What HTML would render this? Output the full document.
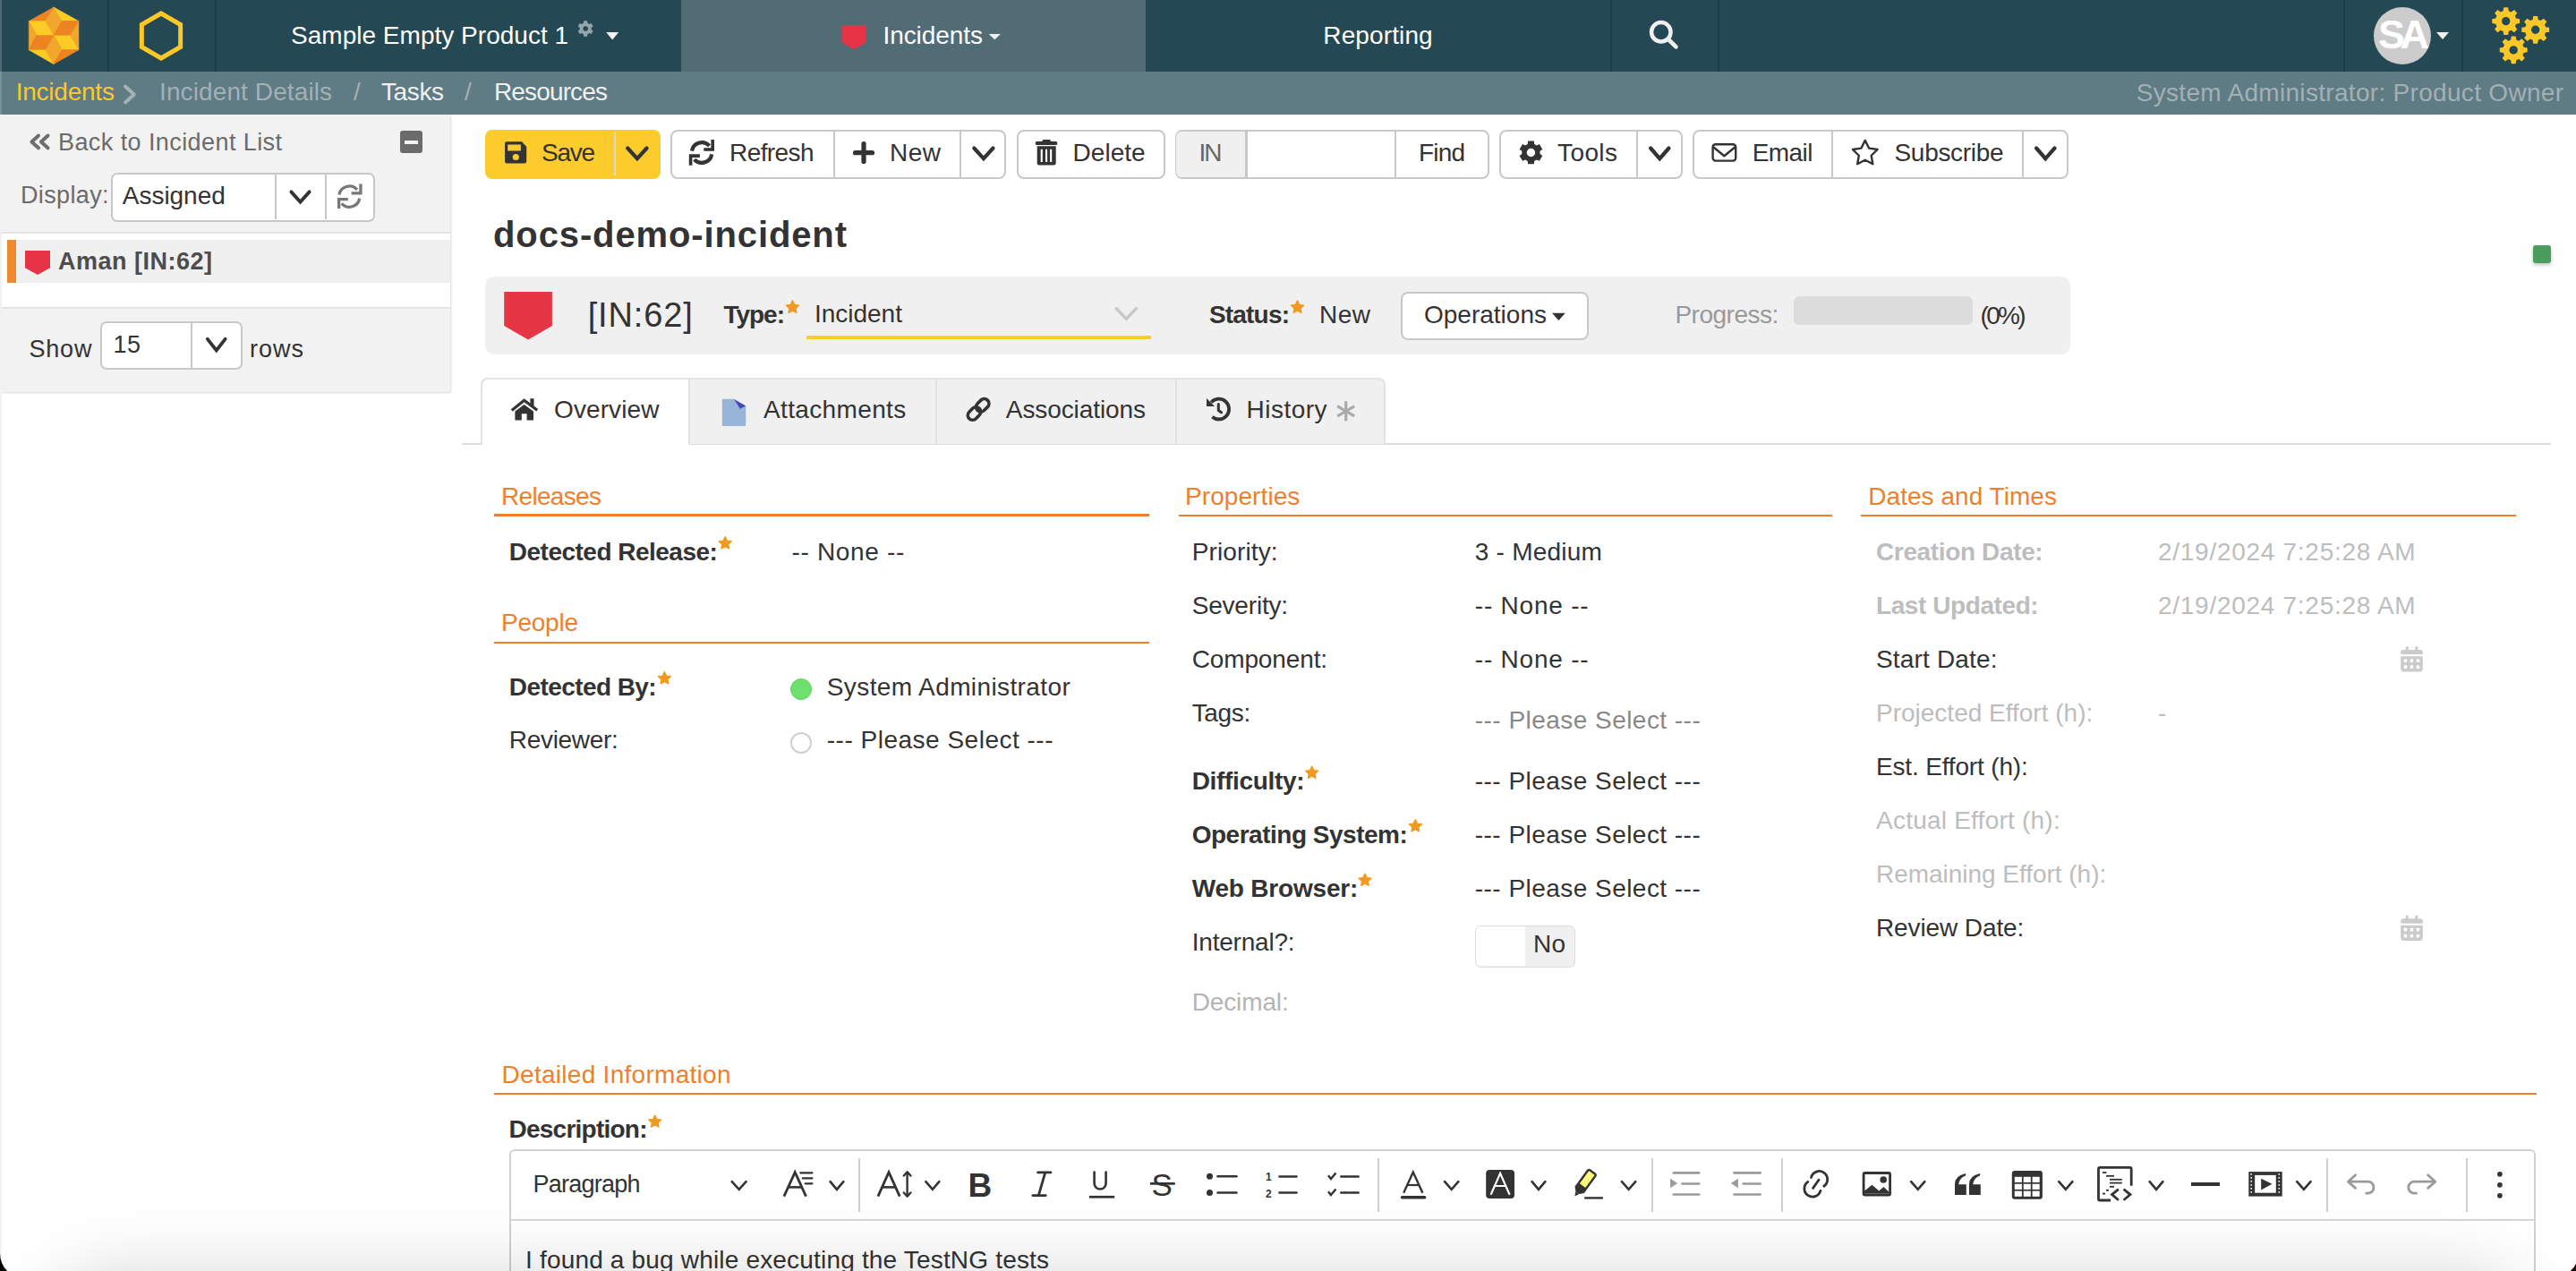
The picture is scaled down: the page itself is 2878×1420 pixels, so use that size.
<!DOCTYPE html>
<html><head><meta charset="utf-8"><style>
html,body{margin:0;padding:0;width:2878px;height:1420px;overflow:hidden;background:#fff;}
body{position:relative;font-family:"Liberation Sans",sans-serif;}
.a{position:absolute;box-sizing:border-box;}
.t{position:absolute;white-space:nowrap;line-height:1;}
svg.a{overflow:visible;}
</style></head><body>
<div class="a" style="left:0px;top:0px;width:2878px;height:80px;background:#244955;"></div>
<div class="a" style="left:761px;top:0px;width:519px;height:80px;background:#516c75;"></div>
<div class="a" style="left:120px;top:0px;width:2px;height:80px;background:#173d49;"></div>
<div class="a" style="left:240px;top:0px;width:2px;height:80px;background:#173d49;"></div>
<div class="a" style="left:1799px;top:0px;width:2px;height:80px;background:#173d49;"></div>
<div class="a" style="left:1919px;top:0px;width:2px;height:80px;background:#173d49;"></div>
<div class="a" style="left:2618px;top:0px;width:2px;height:80px;background:#173d49;"></div>
<div class="a" style="left:2750px;top:0px;width:2px;height:80px;background:#173d49;"></div>
<div class="a" style="left:0px;top:80px;width:2878px;height:48px;background:#5f7b84;"></div>
<div class="t" style="left:325.0px;top:25.7px;font-size:28px;color:#fff;letter-spacing:0.02px;">Sample Empty Product 1</div>
<div class="t" style="left:986.5px;top:26.0px;font-size:28px;color:#fff;letter-spacing:-0.08px;">Incidents</div>
<div class="t" style="left:1478.3px;top:26.0px;font-size:28px;color:#fff;letter-spacing:0.12px;">Reporting</div>
<div class="t" style="left:17.7px;top:89.3px;font-size:28px;color:#fcc92a;letter-spacing:-0.23px;">Incidents</div>
<div class="t" style="left:178.0px;top:89.3px;font-size:28px;color:#a3b0b4;letter-spacing:0.11px;">Incident Details</div>
<div class="t" style="left:395.0px;top:89.3px;font-size:28px;color:#a3b0b4;">/</div>
<div class="t" style="left:426.0px;top:89.3px;font-size:28px;color:#f0f0f0;letter-spacing:-0.39px;">Tasks</div>
<div class="t" style="left:519.0px;top:89.3px;font-size:28px;color:#a3b0b4;">/</div>
<div class="t" style="left:552.0px;top:89.3px;font-size:28px;color:#f0f0f0;letter-spacing:-0.86px;">Resources</div>
<div class="t" style="left:2386.7px;top:89.6px;font-size:28px;color:#a3b0b4;letter-spacing:0.31px;">System Administrator: Product Owner</div>
<div class="a" style="left:2652px;top:8px;width:64px;height:64px;border-radius:50%;background:#cccccc;"></div>
<div class="t" style="left:2657.0px;top:15.5px;font-size:45px;color:#fff;font-weight:bold;letter-spacing:-5.55px;">SA</div>
<div class="a" style="left:2px;top:128px;width:501px;height:310px;background:#f2f2f2;box-shadow:1px 1px 2px rgba(0,0,0,0.15);"></div>
<div class="a" style="left:2px;top:259px;width:501px;height:86px;background:#fff;border-top:2px solid #e4e4e4;border-bottom:2px solid #e4e4e4;"></div>
<div class="a" style="left:8px;top:268px;width:495px;height:48px;background:#f0f0f0;"></div>
<div class="a" style="left:8px;top:268px;width:10px;height:48px;background:#ef8a2f;"></div>
<div class="t" style="left:65.0px;top:146.1px;font-size:27px;color:#6b6b6b;letter-spacing:0.42px;">Back to Incident List</div>
<div class="a" style="left:447px;top:146px;width:25px;height:25px;background:#6b6b6b;border-radius:3px;"></div>
<div class="a" style="left:452px;top:156.5px;width:15px;height:4px;background:#f2f2f2;"></div>
<div class="t" style="left:23.0px;top:205.1px;font-size:27px;color:#6b6b6b;letter-spacing:0.37px;">Display:</div>
<div class="a" style="left:123.5px;top:192.5px;width:295px;height:55px;background:#fff;border:2px solid #c8c8c8;border-radius:7px;"></div>
<div class="a" style="left:307px;top:194px;width:2px;height:51px;background:#c8c8c8;"></div>
<div class="a" style="left:363px;top:194px;width:2px;height:51px;background:#c8c8c8;"></div>
<div class="t" style="left:136.8px;top:205.3px;font-size:28px;color:#333333;letter-spacing:-0.03px;">Assigned</div>
<div class="t" style="left:65.0px;top:278.6px;font-size:27px;color:#4d4d4d;font-weight:bold;letter-spacing:0.49px;">Aman [IN:62]</div>
<div class="t" style="left:32.4px;top:377.1px;font-size:27px;color:#333333;letter-spacing:0.85px;">Show</div>
<div class="a" style="left:111.5px;top:359px;width:159px;height:54px;background:#fff;border:2px solid #c8c8c8;border-radius:7px;"></div>
<div class="a" style="left:213px;top:361px;width:2px;height:50px;background:#c8c8c8;"></div>
<div class="t" style="left:126.6px;top:372.1px;font-size:27px;color:#333333;letter-spacing:0.43px;">15</div>
<div class="t" style="left:279.0px;top:377.1px;font-size:27px;color:#333333;letter-spacing:1.01px;">rows</div>
<div class="a" style="left:542px;top:144.5px;width:196px;height:55px;background:#fccb2c;border-radius:8px;"></div>
<div class="a" style="left:686px;top:148px;width:1.5px;height:48px;background:#d9d9d9;"></div>
<div class="a" style="left:748.5px;top:144.5px;width:375.5px;height:55px;background:#fff;border:2px solid #c8c8c8;border-radius:8px;"></div>
<div class="a" style="left:931px;top:146px;width:2px;height:52px;background:#c8c8c8;"></div>
<div class="a" style="left:1072px;top:146px;width:2px;height:52px;background:#c8c8c8;"></div>
<div class="a" style="left:1135.5px;top:144.5px;width:166.0px;height:55px;background:#fff;border:2px solid #c8c8c8;border-radius:8px;"></div>
<div class="a" style="left:1312.5px;top:144.5px;width:351px;height:55px;background:#fff;border:2px solid #c8c8c8;border-radius:8px;"></div>
<div class="a" style="left:1314px;top:146.5px;width:77px;height:51px;background:#f0f0f0;border-radius:6px 0 0 6px;"></div>
<div class="a" style="left:1390.5px;top:146px;width:3px;height:52px;background:#c8c8c8;"></div>
<div class="a" style="left:1557.5px;top:146px;width:2px;height:52px;background:#c8c8c8;"></div>
<div class="a" style="left:1675px;top:144.5px;width:204.5px;height:55px;background:#fff;border:2px solid #c8c8c8;border-radius:8px;"></div>
<div class="a" style="left:1827.5px;top:146px;width:2px;height:52px;background:#c8c8c8;"></div>
<div class="a" style="left:1890.5px;top:144.5px;width:420.5px;height:55px;background:#fff;border:2px solid #c8c8c8;border-radius:8px;"></div>
<div class="a" style="left:2045.5px;top:146px;width:2px;height:52px;background:#c8c8c8;"></div>
<div class="a" style="left:2259px;top:146px;width:2px;height:52px;background:#c8c8c8;"></div>
<div class="t" style="left:605.0px;top:157.3px;font-size:28px;color:#333333;letter-spacing:-1.28px;">Save</div>
<div class="t" style="left:815.0px;top:157.3px;font-size:28px;color:#333333;letter-spacing:-0.58px;">Refresh</div>
<div class="t" style="left:994.0px;top:157.3px;font-size:28px;color:#333333;letter-spacing:0.43px;">New</div>
<div class="t" style="left:1198.6px;top:157.3px;font-size:28px;color:#333333;letter-spacing:0.02px;">Delete</div>
<div class="t" style="left:1339.5px;top:157.3px;font-size:28px;color:#666;letter-spacing:-2.00px;">IN</div>
<div class="t" style="left:1585.0px;top:157.3px;font-size:28px;color:#333333;letter-spacing:-0.82px;">Find</div>
<div class="t" style="left:1740.0px;top:157.3px;font-size:28px;color:#333333;letter-spacing:0.41px;">Tools</div>
<div class="t" style="left:1957.7px;top:157.3px;font-size:28px;color:#333333;letter-spacing:-0.57px;">Email</div>
<div class="t" style="left:2116.5px;top:157.3px;font-size:28px;color:#333333;letter-spacing:-0.31px;">Subscribe</div>
<div class="t" style="left:551.0px;top:242.1px;font-size:40px;color:#333333;font-weight:bold;letter-spacing:0.88px;">docs-demo-incident</div>
<div class="a" style="left:2830px;top:274px;width:20px;height:20px;background:#4a9c5d;border-radius:3px;box-shadow:0 2px 4px rgba(0,0,0,0.25);"></div>
<div class="a" style="left:542px;top:309px;width:1771px;height:87px;background:#f0f0f0;border-radius:10px;"></div>
<div class="t" style="left:656.7px;top:332.8px;font-size:38px;color:#333333;letter-spacing:0.85px;">[IN:62]</div>
<div class="t" style="left:808.6px;top:338.3px;font-size:28px;color:#333333;font-weight:bold;letter-spacing:-1.06px;">Type:</div>
<div class="t" style="left:910.0px;top:336.8px;font-size:28px;color:#333333;letter-spacing:-0.02px;">Incident</div>
<div class="a" style="left:901px;top:375px;width:385px;height:4px;background:#fccb2c;"></div>
<div class="t" style="left:1351.0px;top:338.3px;font-size:28px;color:#333333;font-weight:bold;letter-spacing:-0.82px;">Status:</div>
<div class="t" style="left:1474.0px;top:338.3px;font-size:28px;color:#333333;letter-spacing:0.43px;">New</div>
<div class="a" style="left:1564.5px;top:326px;width:210px;height:54px;background:#fff;border:2px solid #c8c8c8;border-radius:8px;"></div>
<div class="t" style="left:1591.0px;top:338.3px;font-size:28px;color:#333333;">Operations</div>
<div class="t" style="left:1871.4px;top:338.3px;font-size:28px;color:#999;letter-spacing:-0.48px;">Progress:</div>
<div class="a" style="left:2004px;top:331px;width:200px;height:32px;background:#dcdcdc;border-radius:6px;"></div>
<div class="t" style="left:2212.6px;top:339.3px;font-size:28px;color:#333333;letter-spacing:-2.69px;">(0%)</div>
<div class="a" style="left:516px;top:494.8px;width:2334px;height:2px;background:#dddddd;"></div>
<div class="a" style="left:537px;top:422px;width:1011px;height:74px;background:#f0f0f0;border:2px solid #e2e2e2;border-bottom:none;border-radius:8px 8px 0 0;"></div>
<div class="a" style="left:537px;top:422px;width:234px;height:75px;background:#fff;border:2px solid #e2e2e2;border-bottom:none;border-radius:8px 0 0 0;"></div>
<div class="a" style="left:1045px;top:424px;width:2px;height:72px;background:#e2e2e2;"></div>
<div class="a" style="left:1313px;top:424px;width:2px;height:72px;background:#e2e2e2;"></div>
<div class="t" style="left:619.0px;top:444.0px;font-size:28px;color:#333333;letter-spacing:0.11px;">Overview</div>
<div class="t" style="left:853.0px;top:444.0px;font-size:28px;color:#333333;letter-spacing:0.36px;">Attachments</div>
<div class="t" style="left:1123.8px;top:444.0px;font-size:28px;color:#333333;letter-spacing:-0.09px;">Associations</div>
<div class="t" style="left:1392.5px;top:444.0px;font-size:28px;color:#333333;letter-spacing:0.49px;">History</div>
<div class="t" style="left:560.0px;top:540.6px;font-size:28px;color:#ef7f2c;letter-spacing:-0.68px;">Releases</div>
<div class="a" style="left:552px;top:574.4px;width:732px;height:2.4px;background:#ef7f2c;"></div>
<div class="t" style="left:568.8px;top:602.6px;font-size:28px;color:#333333;font-weight:bold;letter-spacing:-0.51px;">Detected Release:</div>
<div class="t" style="left:884.5px;top:602.6px;font-size:28px;color:#333333;letter-spacing:0.68px;">-- None --</div>
<div class="t" style="left:560.0px;top:682.3px;font-size:28px;color:#ef7f2c;letter-spacing:-0.24px;">People</div>
<div class="a" style="left:552px;top:716.5px;width:732px;height:2.4px;background:#ef7f2c;"></div>
<div class="t" style="left:568.8px;top:753.7px;font-size:28px;color:#333333;font-weight:bold;letter-spacing:-0.57px;">Detected By:</div>
<div class="a" style="left:883px;top:758px;width:24px;height:24px;background:#6ee06e;border:1.5px solid #5fcf5f;border-radius:50%;"></div>
<div class="t" style="left:923.8px;top:753.7px;font-size:28px;color:#333333;letter-spacing:0.39px;">System Administrator</div>
<div class="t" style="left:568.8px;top:813.3px;font-size:28px;color:#333333;letter-spacing:-0.31px;">Reviewer:</div>
<div class="a" style="left:883px;top:818px;width:24px;height:24px;background:#fff;border:2px solid #cfcfcf;border-radius:50%;"></div>
<div class="t" style="left:923.8px;top:813.3px;font-size:28px;color:#333333;letter-spacing:0.50px;">--- Please Select ---</div>
<div class="t" style="left:1324.0px;top:541.3px;font-size:28px;color:#ef7f2c;letter-spacing:0.08px;">Properties</div>
<div class="a" style="left:1316.5px;top:574.6px;width:730.5px;height:2.4px;background:#ef7f2c;"></div>
<div class="t" style="left:1331.7px;top:603.3px;font-size:28px;color:#333333;letter-spacing:0.13px;">Priority:</div>
<div class="t" style="left:1647.8px;top:603.3px;font-size:28px;color:#333333;letter-spacing:0.22px;">3 - Medium</div>
<div class="t" style="left:1331.7px;top:663.3px;font-size:28px;color:#333333;letter-spacing:-0.19px;">Severity:</div>
<div class="t" style="left:1647.8px;top:663.3px;font-size:28px;color:#333333;letter-spacing:0.78px;">-- None --</div>
<div class="t" style="left:1331.7px;top:723.3px;font-size:28px;color:#333333;letter-spacing:-0.13px;">Component:</div>
<div class="t" style="left:1647.8px;top:723.3px;font-size:28px;color:#333333;letter-spacing:0.78px;">-- None --</div>
<div class="t" style="left:1331.7px;top:783.3px;font-size:28px;color:#333333;letter-spacing:-0.36px;">Tags:</div>
<div class="t" style="left:1647.8px;top:790.9px;font-size:28px;color:#888;letter-spacing:0.46px;">--- Please Select ---</div>
<div class="t" style="left:1331.7px;top:858.9px;font-size:28px;color:#333333;font-weight:bold;letter-spacing:-0.33px;">Difficulty:</div>
<div class="t" style="left:1647.8px;top:858.9px;font-size:28px;color:#333333;letter-spacing:0.46px;">--- Please Select ---</div>
<div class="t" style="left:1331.7px;top:918.8px;font-size:28px;color:#333333;font-weight:bold;letter-spacing:-0.49px;">Operating System:</div>
<div class="t" style="left:1647.8px;top:918.8px;font-size:28px;color:#333333;letter-spacing:0.46px;">--- Please Select ---</div>
<div class="t" style="left:1331.7px;top:978.6px;font-size:28px;color:#333333;font-weight:bold;letter-spacing:-0.19px;">Web Browser:</div>
<div class="t" style="left:1647.8px;top:978.6px;font-size:28px;color:#333333;letter-spacing:0.46px;">--- Please Select ---</div>
<div class="t" style="left:1331.7px;top:1038.9px;font-size:28px;color:#333333;letter-spacing:-0.20px;">Internal?:</div>
<div class="t" style="left:1331.7px;top:1106.3px;font-size:28px;color:#b4b4b4;letter-spacing:-0.13px;">Decimal:</div>
<div class="a" style="left:1647.8px;top:1033.5px;width:112.5px;height:47px;background:#f0f0f0;border:1.5px solid #dedede;border-radius:6px;"></div>
<div class="a" style="left:1649.3px;top:1035px;width:55px;height:44px;background:#fff;border-radius:5px 0 0 5px;"></div>
<div class="t" style="left:1713.0px;top:1041.3px;font-size:28px;color:#333333;letter-spacing:0.16px;">No</div>
<div class="t" style="left:2087.3px;top:541.3px;font-size:28px;color:#ef7f2c;letter-spacing:0.04px;">Dates and Times</div>
<div class="a" style="left:2079px;top:574.8px;width:732px;height:2.4px;background:#ef7f2c;"></div>
<div class="t" style="left:2096.0px;top:603.3px;font-size:28px;color:#bdbdbd;font-weight:bold;letter-spacing:-0.36px;">Creation Date:</div>
<div class="t" style="left:2096.0px;top:663.0px;font-size:28px;color:#bdbdbd;font-weight:bold;letter-spacing:-0.42px;">Last Updated:</div>
<div class="t" style="left:2096.0px;top:723.3px;font-size:28px;color:#333333;letter-spacing:0.17px;">Start Date:</div>
<div class="t" style="left:2096.0px;top:783.3px;font-size:28px;color:#bdbdbd;">Projected Effort (h):</div>
<div class="t" style="left:2096.0px;top:843.3px;font-size:28px;color:#333333;letter-spacing:-0.16px;">Est. Effort (h):</div>
<div class="t" style="left:2096.0px;top:903.3px;font-size:28px;color:#bdbdbd;letter-spacing:0.23px;">Actual Effort (h):</div>
<div class="t" style="left:2096.0px;top:963.3px;font-size:28px;color:#bdbdbd;letter-spacing:-0.03px;">Remaining Effort (h):</div>
<div class="t" style="left:2096.0px;top:1023.3px;font-size:28px;color:#333333;letter-spacing:-0.11px;">Review Date:</div>
<div class="t" style="left:2411.0px;top:603.3px;font-size:28px;color:#bdbdbd;letter-spacing:0.72px;">2/19/2024 7:25:28 AM</div>
<div class="t" style="left:2411.0px;top:663.0px;font-size:28px;color:#bdbdbd;letter-spacing:0.72px;">2/19/2024 7:25:28 AM</div>
<div class="t" style="left:2411.0px;top:783.3px;font-size:28px;color:#bdbdbd;">-</div>
<div class="t" style="left:560.6px;top:1186.9px;font-size:28px;color:#ef7f2c;letter-spacing:0.28px;">Detailed Information</div>
<div class="a" style="left:552px;top:1221px;width:2282px;height:2.4px;background:#ef7f2c;"></div>
<div class="t" style="left:568.5px;top:1248.3px;font-size:28px;color:#333333;font-weight:bold;letter-spacing:-0.76px;">Description:</div>
<div class="a" style="left:569px;top:1283.5px;width:2264px;height:300px;background:#fff;border:2px solid #d0d0d0;border-radius:6px;"></div>
<div class="a" style="left:570px;top:1361.5px;width:2262px;height:2px;background:#d6d6d6;"></div>
<div class="t" style="left:595.5px;top:1309.7px;font-size:27px;color:#333333;letter-spacing:-0.76px;">Paragraph</div>
<div class="t" style="left:587.0px;top:1394.3px;font-size:28px;color:#333333;letter-spacing:0.18px;">I found a bug while executing the TestNG tests</div>
<div class="a" style="left:959px;top:1294px;width:2px;height:60px;background:#cfcfcf;"></div>
<div class="a" style="left:1539px;top:1294px;width:2px;height:60px;background:#cfcfcf;"></div>
<div class="a" style="left:1845px;top:1294px;width:2px;height:60px;background:#cfcfcf;"></div>
<div class="a" style="left:1990px;top:1294px;width:2px;height:60px;background:#cfcfcf;"></div>
<div class="a" style="left:2599px;top:1294px;width:2px;height:60px;background:#cfcfcf;"></div>
<div class="a" style="left:2755px;top:1294px;width:2px;height:60px;background:#cfcfcf;"></div>
<div class="a" style="left:70px;top:1442px;width:2738px;height:200px;box-shadow:0 0 80px 20px rgba(0,0,0,0.16);background:rgba(0,0,0,0.16);border-radius:60px;"></div>
<div class="a" style="left:0px;top:0px;width:2px;height:1420px;background:rgba(205,205,205,0.25);"></div>
<svg class="a" style="left:0;top:0;" width="2878" height="1420" viewBox="0 0 2878 1420"><polygon points="60.00,7.97 32.25,23.54 50.65,23.54" fill="#ee8322" stroke="#ee8322" stroke-width="0.5" stroke-linejoin="round"/><polygon points="60.00,7.97 50.65,23.54 60.00,39.69 69.35,23.54" fill="#f2a62b" stroke="#f2a62b" stroke-width="0.5" stroke-linejoin="round"/><polygon points="60.00,7.97 87.92,23.54 69.35,23.54" fill="#fccb25" stroke="#fccb25" stroke-width="0.5" stroke-linejoin="round"/><polygon points="32.25,23.54 50.65,23.54 60.00,39.69 41.03,39.69" fill="#fccb25" stroke="#fccb25" stroke-width="0.5" stroke-linejoin="round"/><polygon points="32.25,23.54 41.03,39.69 32.25,55.83" fill="#f2a62b" stroke="#f2a62b" stroke-width="0.5" stroke-linejoin="round"/><polygon points="69.35,23.54 87.92,23.54 78.41,39.69 60.00,39.69" fill="#ee8322" stroke="#ee8322" stroke-width="0.5" stroke-linejoin="round"/><polygon points="87.92,23.54 87.92,55.83 78.41,39.69" fill="#f2a62b" stroke="#f2a62b" stroke-width="0.5" stroke-linejoin="round"/><polygon points="41.03,39.69 60.00,39.69 50.65,55.83 32.25,55.83" fill="#ee8322" stroke="#ee8322" stroke-width="0.5" stroke-linejoin="round"/><polygon points="60.00,39.69 78.41,39.69 87.92,55.83 69.35,55.83" fill="#fccb25" stroke="#fccb25" stroke-width="0.5" stroke-linejoin="round"/><polygon points="60.00,39.69 69.35,55.83 60.00,71.69 50.65,55.83" fill="#f2a62b" stroke="#f2a62b" stroke-width="0.5" stroke-linejoin="round"/><polygon points="32.25,55.83 50.65,55.83 60.00,71.69" fill="#fccb25" stroke="#fccb25" stroke-width="0.5" stroke-linejoin="round"/><polygon points="69.35,55.83 87.92,55.83 60.00,71.69" fill="#ee8322" stroke="#ee8322" stroke-width="0.5" stroke-linejoin="round"/><polygon points="180.00,15.00 201.65,27.50 201.65,52.50 180.00,65.00 158.35,52.50 158.35,27.50" fill="none" stroke="#fcc827" stroke-width="5" stroke-linejoin="miter"/><path d="M652.05,25.76 L652.20,23.33 L656.20,23.33 L656.35,25.76 L658.53,27.02 L660.71,25.93 L662.71,29.40 L660.68,30.74 L660.68,33.26 L662.71,34.60 L660.71,38.07 L658.53,36.98 L656.35,38.24 L656.20,40.67 L652.20,40.67 L652.05,38.24 L649.87,36.98 L647.69,38.07 L645.69,34.60 L647.72,33.26 L647.72,30.74 L645.69,29.40 L647.69,25.93 L649.87,27.02 Z M657.00,32.00 A2.8,2.8 0 1 0 651.40,32.00 A2.8,2.8 0 1 0 657.00,32.00 Z" fill="#94a5ab" fill-rule="evenodd"/><polygon points="677.20,36.00 691.20,36.00 684.20,44.40" fill="#f0f0f0"/><polygon points="940.50,28.40 967.70,28.40 967.70,47.60 954.10,55.00 940.50,47.60" fill="#e63446"/><polygon points="1104.70,37.90 1117.90,37.90 1111.30,44.30" fill="#f0f0f0"/><circle cx="1855.80" cy="35.85" r="10.75" fill="none" stroke="#f0f0f0" stroke-width="4.5"/><polyline points="1864.50,44.50 1872.50,52.30" fill="none" stroke="#f0f0f0" stroke-width="4.6" stroke-linecap="round" stroke-linejoin="round"/><polygon points="2722.00,36.00 2736.00,36.00 2729.00,44.00" fill="#f0f0f0"/><path d="M2796.65,12.20 L2797.26,8.19 L2802.14,8.19 L2802.75,12.20 L2805.60,13.38 L2808.87,10.98 L2812.32,14.43 L2809.92,17.70 L2811.10,20.55 L2815.11,21.16 L2815.11,26.04 L2811.10,26.65 L2809.92,29.50 L2812.32,32.77 L2808.87,36.22 L2805.60,33.82 L2802.75,35.00 L2802.14,39.01 L2797.26,39.01 L2796.65,35.00 L2793.80,33.82 L2790.53,36.22 L2787.08,32.77 L2789.48,29.50 L2788.30,26.65 L2784.29,26.04 L2784.29,21.16 L2788.30,20.55 L2789.48,17.70 L2787.08,14.43 L2790.53,10.98 L2793.80,13.38 Z M2804.40,23.60 A4.7,4.7 0 1 0 2795.00,23.60 A4.7,4.7 0 1 0 2804.40,23.60 Z" fill="#fcc827" fill-rule="evenodd"/><path d="M2829.65,21.90 L2830.26,17.89 L2835.14,17.89 L2835.75,21.90 L2838.60,23.08 L2841.87,20.68 L2845.32,24.13 L2842.92,27.40 L2844.10,30.25 L2848.11,30.86 L2848.11,35.74 L2844.10,36.35 L2842.92,39.20 L2845.32,42.47 L2841.87,45.92 L2838.60,43.52 L2835.75,44.70 L2835.14,48.71 L2830.26,48.71 L2829.65,44.70 L2826.80,43.52 L2823.53,45.92 L2820.08,42.47 L2822.48,39.20 L2821.30,36.35 L2817.29,35.74 L2817.29,30.86 L2821.30,30.25 L2822.48,27.40 L2820.08,24.13 L2823.53,20.68 L2826.80,23.08 Z M2837.40,33.30 A4.7,4.7 0 1 0 2828.00,33.30 A4.7,4.7 0 1 0 2837.40,33.30 Z" fill="#fcc827" fill-rule="evenodd"/><path d="M2805.15,44.50 L2805.76,40.49 L2810.64,40.49 L2811.25,44.50 L2814.10,45.68 L2817.37,43.28 L2820.82,46.73 L2818.42,50.00 L2819.60,52.85 L2823.61,53.46 L2823.61,58.34 L2819.60,58.95 L2818.42,61.80 L2820.82,65.07 L2817.37,68.52 L2814.10,66.12 L2811.25,67.30 L2810.64,71.31 L2805.76,71.31 L2805.15,67.30 L2802.30,66.12 L2799.03,68.52 L2795.58,65.07 L2797.98,61.80 L2796.80,58.95 L2792.79,58.34 L2792.79,53.46 L2796.80,52.85 L2797.98,50.00 L2795.58,46.73 L2799.03,43.28 L2802.30,45.68 Z M2812.90,55.90 A4.7,4.7 0 1 0 2803.50,55.90 A4.7,4.7 0 1 0 2812.90,55.90 Z" fill="#fcc827" fill-rule="evenodd"/><polyline points="140.00,96.50 149.80,105.50 140.00,114.50" fill="none" stroke="#a3b0b4" stroke-width="4" stroke-linecap="round" stroke-linejoin="round"/><polyline points="43.00,151.60 35.40,158.40 43.00,165.30" fill="none" stroke="#6e6e6e" stroke-width="4" stroke-linecap="round" stroke-linejoin="round"/><polyline points="53.50,151.60 45.90,158.40 53.50,165.30" fill="none" stroke="#6e6e6e" stroke-width="4" stroke-linecap="round" stroke-linejoin="round"/><polyline points="325.36,214.36 335.50,225.64 345.64,214.36" fill="none" stroke="#333333" stroke-width="3.8" stroke-linecap="round" stroke-linejoin="miter"/><path d="M378.88,217.59 A11.6,11.6 0 0 1 398.92,211.84" fill="none" stroke="#777" stroke-width="3.2" stroke-linecap="butt" stroke-linejoin="round"/><path d="M401.72,221.61 A11.6,11.6 0 0 1 381.68,227.36" fill="none" stroke="#777" stroke-width="3.2" stroke-linecap="butt" stroke-linejoin="round"/><polygon points="401.30,205.50 404.60,205.50 404.60,217.60 392.60,217.60 392.60,214.30 401.30,214.30" fill="#777"/><polygon points="377.00,221.00 388.80,221.00 388.80,224.30 380.30,224.30 380.30,233.00 377.00,233.00" fill="#777"/><polygon points="28.00,280.00 56.00,280.00 56.00,299.30 42.00,307.00 28.00,299.30" fill="#e63446"/><polyline points="231.86,378.86 241.75,391.34 251.64,378.86" fill="none" stroke="#333333" stroke-width="3.8" stroke-linecap="round" stroke-linejoin="miter"/><path d="M566.1,158.2 H583 L588.2,164 V180.5 Q588.2,182.5 586.2,182.5 H566.1 Q564.1,182.5 564.1,180.5 V160.2 Q564.1,158.2 566.1,158.2 Z M567.2,161.5 V168.5 H581.9 V161.5 Z M579.9,175.5 A3.6,3.6 0 1 0 572.7,175.5 A3.6,3.6 0 1 0 579.9,175.5 Z" fill="#333333" fill-rule="evenodd"/><polyline points="701.20,165.50 711.90,177.20 722.60,165.50" fill="none" stroke="#333333" stroke-width="4.2" stroke-linecap="round" stroke-linejoin="miter"/><path d="M772.97,168.54 A11.3,11.3 0 0 1 792.50,162.94" fill="none" stroke="#333333" stroke-width="4.2" stroke-linecap="butt" stroke-linejoin="round"/><path d="M795.23,172.46 A11.3,11.3 0 0 1 775.70,178.06" fill="none" stroke="#333333" stroke-width="4.2" stroke-linecap="butt" stroke-linejoin="round"/><polygon points="794.40,156.00 798.00,156.00 798.00,168.75 786.30,168.75 786.30,165.15 794.40,165.15" fill="#333333"/><polygon points="769.80,172.30 781.90,172.30 781.90,175.90 773.40,175.90 773.40,184.80 769.80,184.80" fill="#333333"/><polyline points="965.00,160.50 965.00,180.50" fill="none" stroke="#333333" stroke-width="5.2" stroke-linecap="round" stroke-linejoin="round"/><polyline points="955.50,170.70 974.50,170.70" fill="none" stroke="#333333" stroke-width="5.2" stroke-linecap="round" stroke-linejoin="round"/><polyline points="1088.30,165.50 1098.90,177.20 1109.50,165.50" fill="none" stroke="#333333" stroke-width="4.2" stroke-linecap="round" stroke-linejoin="miter"/><rect x="1156.80" y="157.90" width="24.40" height="4.10" rx="1.5" fill="#333333"/><rect x="1164.50" y="156.10" width="9.50" height="3.00" rx="1.5" fill="#333333"/><path d="M1158.7,163.2 H1179.7 V182 Q1179.7,184.5 1177.2,184.5 H1161.2 Q1158.7,184.5 1158.7,182 Z M1162.7,166.7 V181 H1164.8 V166.7 Z M1168,166.7 V181 H1170.1 V166.7 Z M1173.1,166.7 V181 H1175.2 V166.7 Z" fill="#333333" fill-rule="evenodd"/><path d="M1706.79,160.93 L1707.01,157.60 L1713.89,157.60 L1714.11,160.93 L1716.87,162.52 L1719.85,161.05 L1723.30,167.01 L1720.52,168.85 L1720.52,172.05 L1723.30,173.89 L1719.85,179.85 L1716.87,178.38 L1714.11,179.97 L1713.89,183.30 L1707.01,183.30 L1706.79,179.97 L1704.03,178.38 L1701.05,179.85 L1697.60,173.89 L1700.38,172.05 L1700.38,168.85 L1697.60,167.01 L1701.05,161.05 L1704.03,162.52 Z M1715.15,170.45 A4.7,4.7 0 1 0 1705.75,170.45 A4.7,4.7 0 1 0 1715.15,170.45 Z" fill="#333333" fill-rule="evenodd"/><polyline points="1844.10,165.50 1854.30,177.20 1864.50,165.50" fill="none" stroke="#333333" stroke-width="4.2" stroke-linecap="round" stroke-linejoin="miter"/><rect x="1913.6" y="161.2" width="25.6" height="18.4" rx="3" fill="none" stroke="#333" stroke-width="2.4"/><polyline points="1914.80,164.80 1926.40,174.20 1938.00,164.80" fill="none" stroke="#333333" stroke-width="2.4" stroke-linecap="round" stroke-linejoin="round"/><polygon points="2083.75,156.90 2088.04,165.59 2097.64,166.99 2090.69,173.76 2092.33,183.31 2083.75,178.80 2075.17,183.31 2076.81,173.76 2069.86,166.99 2079.46,165.59" fill="none" stroke="#333333" stroke-width="2.4" stroke-linejoin="round"/><polyline points="2275.10,165.50 2285.30,177.20 2295.50,165.50" fill="none" stroke="#333333" stroke-width="4.2" stroke-linecap="round" stroke-linejoin="miter"/><polygon points="563.20,325.90 616.90,325.90 616.90,364.00 590.05,379.60 563.20,364.00" fill="#e63646"/><polygon points="885.40,335.80 887.63,340.33 892.63,341.05 889.01,344.57 889.87,349.55 885.40,347.20 880.93,349.55 881.79,344.57 878.17,341.05 883.17,340.33" fill="#f29a1f" stroke="#f29a1f" stroke-width="1.2" stroke-linejoin="round"/><polygon points="1449.50,335.80 1451.73,340.33 1456.73,341.05 1453.11,344.57 1453.97,349.55 1449.50,347.20 1445.03,349.55 1445.89,344.57 1442.27,341.05 1447.27,340.33" fill="#f29a1f" stroke="#f29a1f" stroke-width="1.2" stroke-linejoin="round"/><polyline points="1247.29,344.79 1258.35,356.21 1269.41,344.79" fill="none" stroke="#c8c8c8" stroke-width="3.6" stroke-linecap="round" stroke-linejoin="miter"/><polygon points="1734.00,349.70 1748.80,349.70 1741.40,358.00" fill="#333333"/><polyline points="571.80,458.40 585.60,447.30 600.20,458.20" fill="none" stroke="#333333" stroke-width="3.2" stroke-linecap="butt" stroke-linejoin="miter"/><rect x="592.40" y="445.20" width="4.10" height="8.50" rx="0" fill="#333333"/><path d="M575.4,459.5 L585.6,452 L596,459.5 V469.6 H588.6 V462.3 H582.8 V469.6 H575.4 Z" fill="#333333"/><path d="M806.8,445.8 H820.1 L833.2,453.5 V475.9 H806.8 Z" fill="#97b4d9"/><polygon points="820.10,446.00 833.20,453.50 826.90,456.80" fill="#4a48b8"/><g transform="translate(1093.1,457.4) rotate(-45)"><rect x="-14.5" y="-5.3" width="16" height="10.6" rx="5.3" fill="none" stroke="#333" stroke-width="3.6"/><rect x="-1.5" y="-5.3" width="16" height="10.6" rx="5.3" fill="none" stroke="#333" stroke-width="3.6"/></g><path d="M1353.23,449.47 A11.4,11.4 0 1 1 1354.37,465.83" fill="none" stroke="#333333" stroke-width="3.8" stroke-linecap="butt" stroke-linejoin="round"/><polygon points="1348.00,444.90 1348.00,454.00 1357.10,454.00" fill="#333333"/><polyline points="1361.30,451.50 1361.30,458.60 1364.50,460.80" fill="none" stroke="#333333" stroke-width="3" stroke-linecap="round" stroke-linejoin="round"/><polyline points="1503.70,470.30 1503.70,448.30" fill="none" stroke="#aaaaaa" stroke-width="3.2" stroke-linecap="butt" stroke-linejoin="round"/><polyline points="1513.23,464.80 1494.17,453.80" fill="none" stroke="#aaaaaa" stroke-width="3.2" stroke-linecap="butt" stroke-linejoin="round"/><polyline points="1513.23,453.80 1494.17,464.80" fill="none" stroke="#aaaaaa" stroke-width="3.2" stroke-linecap="butt" stroke-linejoin="round"/><polygon points="810.20,599.60 812.37,604.01 817.24,604.71 813.72,608.14 814.55,612.99 810.20,610.70 805.85,612.99 806.68,608.14 803.16,604.71 808.03,604.01" fill="#f29a1f" stroke="#f29a1f" stroke-width="1.2" stroke-linejoin="round"/><polygon points="742.40,750.60 744.57,755.01 749.44,755.71 745.92,759.14 746.75,763.99 742.40,761.70 738.05,763.99 738.88,759.14 735.36,755.71 740.23,755.01" fill="#f29a1f" stroke="#f29a1f" stroke-width="1.2" stroke-linejoin="round"/><polygon points="1465.70,856.10 1467.87,860.51 1472.74,861.21 1469.22,864.64 1470.05,869.49 1465.70,867.20 1461.35,869.49 1462.18,864.64 1458.66,861.21 1463.53,860.51" fill="#f29a1f" stroke="#f29a1f" stroke-width="1.2" stroke-linejoin="round"/><polygon points="1581.30,915.60 1583.47,920.01 1588.34,920.71 1584.82,924.14 1585.65,928.99 1581.30,926.70 1576.95,928.99 1577.78,924.14 1574.26,920.71 1579.13,920.01" fill="#f29a1f" stroke="#f29a1f" stroke-width="1.2" stroke-linejoin="round"/><polygon points="1525.00,976.10 1527.17,980.51 1532.04,981.21 1528.52,984.64 1529.35,989.49 1525.00,987.20 1520.65,989.49 1521.48,984.64 1517.96,981.21 1522.83,980.51" fill="#f29a1f" stroke="#f29a1f" stroke-width="1.2" stroke-linejoin="round"/><polygon points="731.70,1245.90 733.87,1250.31 738.74,1251.01 735.22,1254.44 736.05,1259.29 731.70,1257.00 727.35,1259.29 728.18,1254.44 724.66,1251.01 729.53,1250.31" fill="#f29a1f" stroke="#f29a1f" stroke-width="1.2" stroke-linejoin="round"/><rect x="2687.70" y="722.30" width="3.20" height="5.00" rx="1" fill="#cbcbcb"/><rect x="2698.20" y="722.30" width="3.20" height="5.00" rx="1" fill="#cbcbcb"/><path d="M2682.2,731.0 Q2682.2,726.0 2686.2,726.0 H2702.7999999999997 Q2706.7999999999997,726.0 2706.7999999999997,731.0 V730.8 Z" fill="#cbcbcb"/><rect x="2682.20" y="726.00" width="24.60" height="4.80" rx="2.5" fill="#cbcbcb"/><path d="M2682.2,733.1999999999999 H2706.7999999999997 V747.3 Q2706.7999999999997,750.4 2703.7,750.4 H2685.2999999999997 Q2682.2,750.4 2682.2,747.3 Z" fill="#cbcbcb"/><rect x="2685.70" y="736.30" width="3.50" height="3.80" rx="0.8" fill="#ffffff"/><rect x="2685.70" y="743.30" width="3.50" height="3.80" rx="0.8" fill="#ffffff"/><rect x="2692.70" y="736.30" width="3.50" height="3.80" rx="0.8" fill="#ffffff"/><rect x="2692.70" y="743.30" width="3.50" height="3.80" rx="0.8" fill="#ffffff"/><rect x="2699.70" y="736.30" width="3.50" height="3.80" rx="0.8" fill="#ffffff"/><rect x="2699.70" y="743.30" width="3.50" height="3.80" rx="0.8" fill="#ffffff"/><rect x="2687.70" y="1022.80" width="3.20" height="5.00" rx="1" fill="#cbcbcb"/><rect x="2698.20" y="1022.80" width="3.20" height="5.00" rx="1" fill="#cbcbcb"/><path d="M2682.2,1031.5 Q2682.2,1026.5 2686.2,1026.5 H2702.7999999999997 Q2706.7999999999997,1026.5 2706.7999999999997,1031.5 V1031.3 Z" fill="#cbcbcb"/><rect x="2682.20" y="1026.50" width="24.60" height="4.80" rx="2.5" fill="#cbcbcb"/><path d="M2682.2,1033.7 H2706.7999999999997 V1047.8 Q2706.7999999999997,1050.8999999999999 2703.7,1050.8999999999999 H2685.2999999999997 Q2682.2,1050.8999999999999 2682.2,1047.8 Z" fill="#cbcbcb"/><rect x="2685.70" y="1036.80" width="3.50" height="3.80" rx="0.8" fill="#ffffff"/><rect x="2685.70" y="1043.80" width="3.50" height="3.80" rx="0.8" fill="#ffffff"/><rect x="2692.70" y="1036.80" width="3.50" height="3.80" rx="0.8" fill="#ffffff"/><rect x="2692.70" y="1043.80" width="3.50" height="3.80" rx="0.8" fill="#ffffff"/><rect x="2699.70" y="1036.80" width="3.50" height="3.80" rx="0.8" fill="#ffffff"/><rect x="2699.70" y="1043.80" width="3.50" height="3.80" rx="0.8" fill="#ffffff"/><polyline points="817.73,1320.13 825.65,1328.87 833.57,1320.13" fill="none" stroke="#333333" stroke-width="2.6" stroke-linecap="round" stroke-linejoin="miter"/><polyline points="875.90,1336.60 888.20,1309.60 900.50,1336.60" fill="none" stroke="#333333" stroke-width="2.8" stroke-linecap="butt" stroke-linejoin="miter"/><polyline points="880.50,1326.40 895.70,1326.40" fill="none" stroke="#333333" stroke-width="2.6" stroke-linecap="butt" stroke-linejoin="round"/><polyline points="894.30,1310.30 907.40,1310.30" fill="none" stroke="#333333" stroke-width="2.3" stroke-linecap="round" stroke-linejoin="round"/><polyline points="896.80,1316.40 907.40,1316.40" fill="none" stroke="#333333" stroke-width="2.3" stroke-linecap="round" stroke-linejoin="round"/><polyline points="899.70,1322.30 907.40,1322.30" fill="none" stroke="#333333" stroke-width="2.3" stroke-linecap="round" stroke-linejoin="round"/><polyline points="927.53,1320.13 934.95,1328.87 942.37,1320.13" fill="none" stroke="#333333" stroke-width="2.6" stroke-linecap="round" stroke-linejoin="miter"/><polyline points="980.90,1336.60 993.00,1309.60 1005.20,1336.60" fill="none" stroke="#333333" stroke-width="2.8" stroke-linecap="butt" stroke-linejoin="miter"/><polyline points="985.50,1326.40 1000.50,1326.40" fill="none" stroke="#333333" stroke-width="2.6" stroke-linecap="butt" stroke-linejoin="round"/><polyline points="1013.60,1310.00 1013.60,1336.00" fill="none" stroke="#333333" stroke-width="2.4" stroke-linecap="butt" stroke-linejoin="round"/><polyline points="1009.80,1313.50 1013.60,1309.30 1017.40,1313.50" fill="none" stroke="#333333" stroke-width="2.4" stroke-linecap="round" stroke-linejoin="round"/><polyline points="1009.80,1332.50 1013.60,1336.70 1017.40,1332.50" fill="none" stroke="#333333" stroke-width="2.4" stroke-linecap="round" stroke-linejoin="round"/><polyline points="1034.33,1320.13 1041.85,1328.87 1049.37,1320.13" fill="none" stroke="#333333" stroke-width="2.6" stroke-linecap="round" stroke-linejoin="miter"/><text x="1081.5" y="1336.6" font-family="Liberation Sans" font-weight="bold" font-size="37" fill="#333">B</text><polyline points="1159.50,1309.90 1174.00,1309.90" fill="none" stroke="#333333" stroke-width="2.6" stroke-linecap="round" stroke-linejoin="round"/><polyline points="1153.80,1335.60 1168.30,1335.60" fill="none" stroke="#333333" stroke-width="2.6" stroke-linecap="round" stroke-linejoin="round"/><polyline points="1167.80,1309.90 1160.30,1335.60" fill="none" stroke="#333333" stroke-width="2.8" stroke-linecap="butt" stroke-linejoin="round"/><path d="M1222.6,1309.6 V1322 A6.5,6.5 0 0 0 1235.6,1322 V1309.6" fill="none" stroke="#333333" stroke-width="2.6" stroke-linecap="round" stroke-linejoin="round"/><rect x="1216.90" y="1335.90" width="28.30" height="2.70" rx="0" fill="#333333"/><text x="1286.5" y="1335.5" font-family="Liberation Sans" font-size="35" fill="#333">S</text><rect x="1285.00" y="1321.00" width="27.80" height="2.70" rx="0" fill="#333333"/><circle cx="1351.50" cy="1314.30" r="3.50" fill="#333333"/><polyline points="1360.50,1314.30 1381.50,1314.30" fill="none" stroke="#333333" stroke-width="2.5" stroke-linecap="round" stroke-linejoin="round"/><circle cx="1351.50" cy="1332.40" r="3.50" fill="#333333"/><polyline points="1360.50,1332.40 1381.50,1332.40" fill="none" stroke="#333333" stroke-width="2.5" stroke-linecap="round" stroke-linejoin="round"/><text x="1414" y="1318.5" font-family="Liberation Sans" font-weight="bold" font-size="12" fill="#333">1</text><text x="1414" y="1338" font-family="Liberation Sans" font-weight="bold" font-size="12" fill="#333">2</text><polyline points="1429.50,1314.50 1448.50,1314.50" fill="none" stroke="#333333" stroke-width="2.6" stroke-linecap="round" stroke-linejoin="round"/><polyline points="1429.50,1332.50 1448.50,1332.50" fill="none" stroke="#333333" stroke-width="2.6" stroke-linecap="round" stroke-linejoin="round"/><polyline points="1484.00,1313.30 1486.90,1317.00 1492.50,1310.50" fill="none" stroke="#333333" stroke-width="2.4" stroke-linecap="butt" stroke-linejoin="miter"/><polyline points="1498.30,1314.50 1517.60,1314.50" fill="none" stroke="#333333" stroke-width="2.6" stroke-linecap="round" stroke-linejoin="round"/><polyline points="1484.00,1331.30 1486.90,1335.00 1492.50,1328.50" fill="none" stroke="#333333" stroke-width="2.4" stroke-linecap="butt" stroke-linejoin="miter"/><polyline points="1498.30,1332.50 1517.60,1332.50" fill="none" stroke="#333333" stroke-width="2.6" stroke-linecap="round" stroke-linejoin="round"/><polyline points="1568.20,1332.80 1578.80,1309.60 1589.40,1332.80" fill="none" stroke="#333333" stroke-width="2.4" stroke-linecap="butt" stroke-linejoin="miter"/><polyline points="1572.30,1324.00 1585.30,1324.00" fill="none" stroke="#333333" stroke-width="2.2" stroke-linecap="butt" stroke-linejoin="round"/><polyline points="1566.60,1337.80 1591.60,1337.80" fill="none" stroke="#333333" stroke-width="3.6" stroke-linecap="round" stroke-linejoin="round"/><polyline points="1614.03,1320.13 1621.70,1328.87 1629.37,1320.13" fill="none" stroke="#333333" stroke-width="2.6" stroke-linecap="round" stroke-linejoin="miter"/><rect x="1660.20" y="1306.90" width="31.80" height="32.00" rx="4" fill="#333333"/><polyline points="1665.60,1334.80 1676.10,1310.90 1686.60,1334.80" fill="none" stroke="#ffffff" stroke-width="2.2" stroke-linecap="butt" stroke-linejoin="miter"/><polyline points="1670.00,1325.00 1682.00,1325.00" fill="none" stroke="#ffffff" stroke-width="2" stroke-linecap="butt" stroke-linejoin="round"/><polyline points="1711.53,1320.13 1718.95,1328.87 1726.37,1320.13" fill="none" stroke="#333333" stroke-width="2.6" stroke-linecap="round" stroke-linejoin="miter"/><g transform="translate(1770,1322) rotate(36)"><rect x="-5.2" y="-15.5" width="10.4" height="20" rx="2" fill="#fdfb7a" stroke="#333" stroke-width="2.4"/><path d="M-6.4,4 H6.4 V9 L2.5,13 H-2.5 L-6.4,9 Z" fill="#333"/><path d="M-2.5,13 L2.5,13 L0,18 Z" fill="#333"/></g><rect x="1770.20" y="1337.20" width="20.70" height="2.40" rx="0" fill="#333333"/><polyline points="1811.93,1320.13 1819.60,1328.87 1827.27,1320.13" fill="none" stroke="#333333" stroke-width="2.6" stroke-linecap="round" stroke-linejoin="miter"/><polyline points="1869.80,1310.40 1898.20,1310.40" fill="none" stroke="#9a9a9a" stroke-width="2.6" stroke-linecap="round" stroke-linejoin="round"/><polyline points="1879.40,1322.50 1898.20,1322.50" fill="none" stroke="#9a9a9a" stroke-width="2.6" stroke-linecap="round" stroke-linejoin="round"/><polyline points="1869.80,1334.50 1898.20,1334.50" fill="none" stroke="#9a9a9a" stroke-width="2.6" stroke-linecap="round" stroke-linejoin="round"/><polygon points="1866.10,1316.70 1874.20,1322.00 1866.10,1327.30" fill="#9a9a9a"/><polyline points="1937.50,1310.40 1966.60,1310.40" fill="none" stroke="#9a9a9a" stroke-width="2.6" stroke-linecap="round" stroke-linejoin="round"/><polyline points="1947.60,1322.50 1966.60,1322.50" fill="none" stroke="#9a9a9a" stroke-width="2.6" stroke-linecap="round" stroke-linejoin="round"/><polyline points="1937.50,1334.50 1966.60,1334.50" fill="none" stroke="#9a9a9a" stroke-width="2.6" stroke-linecap="round" stroke-linejoin="round"/><polygon points="1941.90,1316.70 1933.80,1322.00 1941.90,1327.30" fill="#9a9a9a"/><path d="M2023.57,1315.47 A9.2,9.2 0 1 1 2037.78,1325.24" fill="none" stroke="#333333" stroke-width="2.8" stroke-linecap="round" stroke-linejoin="round"/><path d="M2033.94,1330.44 A9.2,9.2 0 1 1 2019.82,1320.36" fill="none" stroke="#333333" stroke-width="2.8" stroke-linecap="round" stroke-linejoin="round"/><polyline points="2025.60,1327.40 2032.00,1318.20" fill="none" stroke="#333333" stroke-width="2.8" stroke-linecap="round" stroke-linejoin="round"/><rect x="2082.1" y="1310.5" width="29.5" height="24.5" rx="1.5" fill="none" stroke="#333" stroke-width="2.8"/><circle cx="2104.20" cy="1318.00" r="3.80" fill="#333333"/><polygon points="2082.50,1333.50 2082.50,1331.00 2091.50,1323.80 2099.30,1330.50 2104.50,1326.00 2111.20,1332.50 2111.20,1333.50" fill="#333333"/><polyline points="2135.13,1320.13 2142.75,1328.87 2150.37,1320.13" fill="none" stroke="#333333" stroke-width="2.6" stroke-linecap="round" stroke-linejoin="miter"/><path d="M2184,1334.9 V1323 Q2184,1313.5 2196.2,1311 V1313.2 Q2189,1316 2188.2,1323.3 H2196.8 V1334.9 Z" fill="#333333"/><path d="M2200,1334.9 V1323 Q2200,1313.5 2212.2,1311 V1313.2 Q2205,1316 2204.2,1323.3 H2212.8 V1334.9 Z" fill="#333333"/><rect x="2247.80" y="1307.90" width="34.10" height="31.80" rx="3" fill="#333333"/><rect x="2250.80" y="1314.80" width="8.10" height="6.20" rx="0" fill="#ffffff"/><rect x="2250.80" y="1322.70" width="8.10" height="6.20" rx="0" fill="#ffffff"/><rect x="2250.80" y="1330.60" width="8.10" height="6.20" rx="0" fill="#ffffff"/><rect x="2260.70" y="1314.80" width="8.10" height="6.20" rx="0" fill="#ffffff"/><rect x="2260.70" y="1322.70" width="8.10" height="6.20" rx="0" fill="#ffffff"/><rect x="2260.70" y="1330.60" width="8.10" height="6.20" rx="0" fill="#ffffff"/><rect x="2270.60" y="1314.80" width="8.10" height="6.20" rx="0" fill="#ffffff"/><rect x="2270.60" y="1322.70" width="8.10" height="6.20" rx="0" fill="#ffffff"/><rect x="2270.60" y="1330.60" width="8.10" height="6.20" rx="0" fill="#ffffff"/><polyline points="2300.23,1320.13 2307.85,1328.87 2315.47,1320.13" fill="none" stroke="#333333" stroke-width="2.6" stroke-linecap="round" stroke-linejoin="miter"/><path d="M2358,1341 H2346 Q2344.5,1341 2344.5,1339.5 V1305.9 Q2344.5,1304.4 2346,1304.4 H2379.5 Q2381.2,1304.4 2381.2,1306 V1324.8" fill="none" stroke="#333333" stroke-width="2.8" stroke-linecap="butt" stroke-linejoin="round"/><rect x="2349.00" y="1309.10" width="4.50" height="1.80" rx="0" fill="#333333"/><rect x="2353.00" y="1312.90" width="9.00" height="1.80" rx="0" fill="#333333"/><rect x="2357.00" y="1316.90" width="13.80" height="1.80" rx="0" fill="#333333"/><rect x="2357.00" y="1320.70" width="13.80" height="1.80" rx="0" fill="#333333"/><rect x="2357.00" y="1324.90" width="5.00" height="1.80" rx="0" fill="#333333"/><rect x="2353.00" y="1328.90" width="3.00" height="1.80" rx="0" fill="#333333"/><rect x="2349.00" y="1332.70" width="3.00" height="1.80" rx="0" fill="#333333"/><polyline points="2366.00,1329.30 2359.50,1334.60 2366.00,1340.00" fill="none" stroke="#333333" stroke-width="2.8" stroke-linecap="round" stroke-linejoin="miter"/><polyline points="2373.50,1329.30 2380.00,1334.60 2373.50,1340.00" fill="none" stroke="#333333" stroke-width="2.8" stroke-linecap="round" stroke-linejoin="miter"/><polyline points="2401.63,1320.13 2409.05,1328.87 2416.47,1320.13" fill="none" stroke="#333333" stroke-width="2.6" stroke-linecap="round" stroke-linejoin="miter"/><rect x="2448.00" y="1321.00" width="32.00" height="4.00" rx="0" fill="#333333"/><rect x="2512.30" y="1309.10" width="37.40" height="27.50" rx="0" fill="#333333"/><rect x="2519.20" y="1312.90" width="23.60" height="19.80" rx="0" fill="#ffffff"/><polygon points="2526.20,1316.70 2538.50,1322.80 2526.20,1329.50" fill="#333333"/><rect x="2514.40" y="1311.10" width="1.60" height="1.60" rx="0" fill="#ffffff"/><rect x="2545.50" y="1311.10" width="1.60" height="1.60" rx="0" fill="#ffffff"/><rect x="2514.40" y="1315.10" width="1.60" height="1.60" rx="0" fill="#ffffff"/><rect x="2545.50" y="1315.10" width="1.60" height="1.60" rx="0" fill="#ffffff"/><rect x="2514.40" y="1319.10" width="1.60" height="1.60" rx="0" fill="#ffffff"/><rect x="2545.50" y="1319.10" width="1.60" height="1.60" rx="0" fill="#ffffff"/><rect x="2514.40" y="1323.10" width="1.60" height="1.60" rx="0" fill="#ffffff"/><rect x="2545.50" y="1323.10" width="1.60" height="1.60" rx="0" fill="#ffffff"/><rect x="2514.40" y="1327.10" width="1.60" height="1.60" rx="0" fill="#ffffff"/><rect x="2545.50" y="1327.10" width="1.60" height="1.60" rx="0" fill="#ffffff"/><rect x="2514.40" y="1331.10" width="1.60" height="1.60" rx="0" fill="#ffffff"/><rect x="2545.50" y="1331.10" width="1.60" height="1.60" rx="0" fill="#ffffff"/><polyline points="2566.23,1320.13 2573.90,1328.87 2581.57,1320.13" fill="none" stroke="#333333" stroke-width="2.6" stroke-linecap="round" stroke-linejoin="miter"/><path d="M2631.6,1312.8 L2623.4,1320.2 L2631.6,1327.4 M2624.5,1320.2 H2645.5 A6.5,6.5 0 0 1 2645.5,1333.2 H2643.8" fill="none" stroke="#9a9a9a" stroke-width="2.8" stroke-linecap="round" stroke-linejoin="round"/><path d="M2712.6,1312.8 L2720.8,1320.2 L2712.6,1327.4 M2719.7,1320.2 H2697.3 A6.5,6.5 0 0 0 2697.3,1333.2 H2699.5" fill="none" stroke="#9a9a9a" stroke-width="2.8" stroke-linecap="round" stroke-linejoin="round"/><circle cx="2792.90" cy="1311.80" r="2.90" fill="#333333"/><circle cx="2792.90" cy="1323.80" r="2.90" fill="#333333"/><circle cx="2792.90" cy="1335.80" r="2.90" fill="#333333"/><path d="M0,1400 A29,29 0 0 0 8,1420 H0 Z" fill="#000"/><path d="M2878,1412 A29,29 0 0 1 2871.8,1420 H2878 Z" fill="#1a0500"/></svg>
</body></html>
